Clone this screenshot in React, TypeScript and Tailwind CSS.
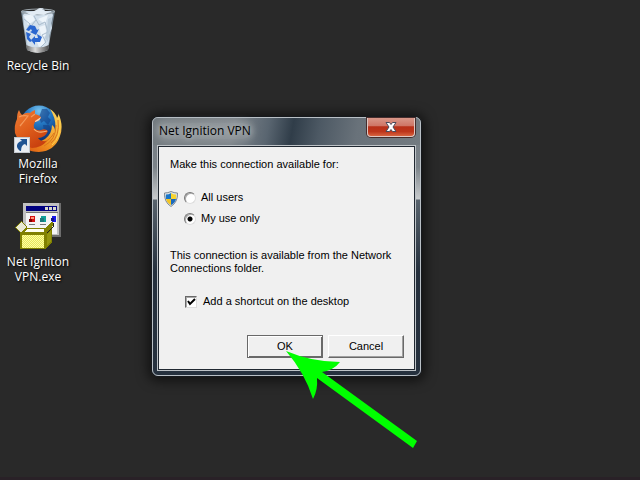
import type { ReactNode } from 'react';

function RecycleBinIcon() {
  return (
    <svg viewBox="0 0 48 48" className="h-12 w-12" aria-hidden="true">
      <defs>
        <linearGradient id="binGlass" x1="0" x2="1">
          <stop offset="0" stopColor="#71828f" />
          <stop offset="0.2" stopColor="#c3d2de" />
          <stop offset="0.75" stopColor="#b9cad8" />
          <stop offset="1" stopColor="#5c6b77" />
        </linearGradient>
        <linearGradient id="binBase" x1="0" x2="1">
          <stop offset="0" stopColor="#666" />
          <stop offset="0.4" stopColor="#dcdcdc" />
          <stop offset="1" stopColor="#4a4a4a" />
        </linearGradient>
      </defs>
      <path d="M7 4 L13 43 Q24 48 34 43 L41 4 Z" fill="url(#binGlass)" />
      <path d="M9 8 L13 4 20 5 25 1 29 1 31 4 37 4 39 8 37 16 38 21 35 28 35 34 33 40 14 40 12 27 10 20Z" fill="#d3e0ec" />
      <path d="M10 9 L18 7 21 13 14 18Z M24 12 L34 8 31 17Z M25 20 L31 18 33 28 28 31Z M22 33 L29 30 31 37 25 40Z" fill="#edf4fa" />
      <path d="M20 9 L25 18 31 15 34 25 28 28 M10 12 L16 17 13 22 M28 28 L32 35 27 40 M22 13 L18 18" fill="none" stroke="#a9bccd" strokeWidth="1" />
      <path d="M34 12 L38 10 36 24 34 35 31 31 33 22Z" fill="#b3c5d6" opacity="0.8" />
      <path d="M13 42 L12 38 Q24 43 35 38 L34 43 Q24 49 13 43Z" fill="url(#binBase)" />
      <path d="M8 5 Q24 11 40 5" fill="none" stroke="#9aabb8" strokeWidth="0.800" />
      <ellipse cx="24" cy="4.500" rx="16.500" ry="2.500" fill="none" stroke="#9aa3a9" strokeWidth="1.200" />
      <path d="M13 6 L20 4 27 1 30 4 35 5 30 8 23 7 18 9Z" fill="#e3ecf4" />
      <g fill="#2a66cf">
        <path d="M12 23 L16 18 21 19 23 23 25 22 22 28 16 25 18 24 17 22 15 24Z" />
        <path d="M12 25 L17 27 15 30 18 34 16 35 13 32Z" />
        <path d="M17 33 L21 29 21 31 24 31 23 27 28 30 26 35 21 35 21 38Z" />
      </g>
    </svg>
  );
}

function FirefoxIcon() {
  return (
    <svg viewBox="0 0 48 48" className="h-12 w-12" aria-hidden="true">
      <defs>
        <radialGradient id="globe" cx="0.5" cy="0.15" r="0.85">
          <stop offset="0" stopColor="#79c4ee" />
          <stop offset="0.4" stopColor="#2478c4" />
          <stop offset="1" stopColor="#0a2866" />
        </radialGradient>
        <linearGradient id="fox" x1="0" y1="0" x2="0.6" y2="1">
          <stop offset="0" stopColor="#ee7d35" />
          <stop offset="0.5" stopColor="#e0601d" />
          <stop offset="1" stopColor="#c9410f" />
        </linearGradient>
        <linearGradient id="foxTail" x1="0" y1="1" x2="1" y2="0">
          <stop offset="0" stopColor="#d94a10" />
          <stop offset="0.4" stopColor="#ee8d1e" />
          <stop offset="1" stopColor="#ffe163" />
        </linearGradient>
      </defs>
      <circle cx="25" cy="19" r="18.500" fill="url(#globe)" />
      <path d="M28 4 L33 4 36 8 34 12 37 15 34 20 30 16 27 18 25 12Z M29 20 L35 20 38 25 34 30 30 27Z" fill="#123f87" opacity="0.6" />
      <path d="M36 4 Q42 8 43 13 Q45 10 44 8 Q50 20 46 31 Q41 46 25 47 Q10 47 4 35 L12 32 Q22 40 31 34 Q38 29 38 20 Q41 22 41 26 Q43 15 36 4Z" fill="url(#foxTail)" />
      <path d="M44 15 Q46 31 37 38 M42 20 Q42 35 30 41 M40 28 Q35 37 26 38" fill="none" stroke="#d9761c" strokeWidth="1" />
      <path d="M46 17 Q47 32 38 40" fill="none" stroke="#ffd34a" strokeWidth="1" />
      <path d="M3 14 Q3 8 5 5 Q6 8 8 10 Q12 7 16 8 Q18 6 21 5 L21 9 Q25 10 27 12 Q26 16 21 17 Q19 20 20 23 Q23 26 27 25 Q31 23 34 26 Q31 33 24 33 Q27 37 33 36 Q27 43 18 43 Q5 41 1 28 Q0 20 3 14Z" fill="url(#fox)" />
      <path d="M5 12 Q9 10 14 11 Q11 15 6 21 M21 9 L17 12" fill="none" stroke="#f49a5b" strokeWidth="1.200" />
      <path d="M20 24 Q24 29 33 26" fill="none" stroke="#f7b277" strokeWidth="1.200" />
      <path d="M21 16 Q24 14 27 12 Q26 16 21 17Z" fill="#f9d9bd" />
      <g>
        <rect x="0.500" y="32.500" width="15" height="15" fill="#e9edf2" stroke="#c3c8ce" />
        <path d="M6 46 Q1 42 4 38 Q6 36 8 36 L6 34 13 34 13 41 11 39 Q7 40 7 46Z" fill="#1f5392" />
      </g>
    </svg>
  );
}

function InstallerIcon() {
  return (
    <svg viewBox="0 0 48 48" className="h-12 w-12" aria-hidden="true" shapeRendering="crispEdges">
      <defs>
        <pattern id="boxDots" width="2" height="2" patternUnits="userSpaceOnUse">
          <rect width="2" height="2" fill="#ffffa0" />
          <rect width="1" height="1" fill="#e6e65c" />
          <rect x="1" y="1" width="1" height="1" fill="#e6e65c" />
        </pattern>
      </defs>
      <rect x="9" y="0" width="38" height="34" fill="#6d6d6d" />
      <rect x="9" y="0" width="36" height="32" fill="#c0c0c0" />
      <rect x="12" y="10" width="31" height="21" fill="#f4f4f4" />
      <rect x="12" y="3" width="31" height="5" fill="#000080" />
      <path d="M31 4h3v3h-3z M35 4h3v3h-3z M39 4h3v3h-3z" fill="#d7d7c9" />
      <rect x="12" y="9" width="32" height="1" fill="#777" />
      <g>
        <path d="M16 13h5v6h-5z" fill="#d51010" />
        <path d="M17 14h3v2h-3z" fill="#ff967c" />
        <path d="M15 16h3v3h-3z" fill="#800000" />
        <path d="M27 13h5v6h-5z" fill="#10a09a" />
        <path d="M26 15h4v4h-4z" fill="#1c7b7c" />
        <path d="M38 13h4v6h-4z" fill="#1717e8" />
        <path d="M37 15h3v3h-3z" fill="#10108a" />
        <path d="M15 21h6v1h-6z M26 21h6v1h-6z M35 21h3v1h-3z" fill="#777" />
      </g>
      <path d="M12 25 H31 L38 19 40 21 38 24 38 39 31 46 H6 V30Z" fill="#808000" />
      <path d="M13 26H30V29H10Z" fill="#fffff0" />
      <path d="M8 32H30V45H8Z" fill="url(#boxDots)" />
      <path d="M33 31 L37 27 V38 L33 42Z" fill="#96960f" />
      <path d="M39 20 L39 24 33 30" fill="none" stroke="#222" />
      <path d="M1 25 L7 18 13 24 7 31Z" fill="#808000" />
      <path d="M2 25 L7 19 12 24 7 30Z" fill="#e8e8d4" />
    </svg>
  );
}

function ShieldIcon() {
  return (
    <svg viewBox="0 0 14 16" className="h-4 w-3.5 shrink-0" aria-hidden="true">
      <path d="M7 0.500 Q10 2 13.500 2 Q14 11 7 15.500 Q0 11 0.500 2 Q4 2 7 0.500Z" fill="#dce4e9" stroke="#7f8992" />
      <path d="M7 2 V8 H2 Q1.500 6 2 3.500 Q5 3.500 7 2Z" fill="#1976c9" />
      <path d="M7 2 V8 H12 Q12.500 6 12 3.500 Q9 3.500 7 2Z" fill="#f8d42f" />
      <path d="M7 8 V14 Q3 12 2 8Z" fill="#f3c522" />
      <path d="M7 8 V14 Q11 12 12 8Z" fill="#1b69bc" />
    </svg>
  );
}

function DesktopIcon({ icon, label }: { icon: ReactNode; label: string }) {
  return (
    <button
      type="button"
      className="flex h-[98px] w-full flex-col items-center gap-[3px] font-['Open_Sans','Noto_Sans',sans-serif] text-[12px] leading-[15px] text-white [text-shadow:1px_1px_2px_#000]"
    >
      {icon}
      <span className="w-[70px] text-center">{label}</span>
    </button>
  );
}

const radioClass =
  'm-0 h-3 w-3 shrink-0 appearance-none rounded-full border border-t-[#777] border-l-[#777] border-r-[#ddd] border-b-[#ddd] bg-white shadow-[inset_1px_1px_0_#aaa] checked:bg-[radial-gradient(circle,#000_2px,#fff_3px)]';

const buttonClass =
  'h-[23px] w-[76px] border bg-[#f0f0f0]';

function ConnectionDialog() {
  return (
    <section
      role="dialog"
      aria-labelledby="dialog-title"
      className="absolute top-[116px] left-[151px] w-[271px] rounded-[7px] border border-[#16191d] bg-[linear-gradient(#737b82_0px,#7b8389_50px,#c8cbcd_82px,#58636d_83px,#25303d_155px,#26313e_100%)] font-['Liberation_Sans',Arial,sans-serif] text-[11px] leading-[13px] text-black shadow-[0_1px_12px_3px_#0009]"
    >
      <div className="rounded-[6px] border border-[#b9c0c6] px-1 pb-1">
        <header className="-mx-1 flex h-[27px] items-start justify-between rounded-t-[5px] bg-[linear-gradient(100deg,#737b80_0%,#7e858b_30%,#596570_43%,#303d49_52%,#4d5964_62%,#69727a_76%,#737b81_100%)] pl-1.5">
          <h1
            id="dialog-title"
            className="mt-[5px] rounded-full bg-[#a4a9ad]/40 font-['Open_Sans','Noto_Sans',sans-serif] text-[12px] leading-[16px] shadow-[0_0_6px_3px_#a4a9ad66] [text-shadow:0_0_6px_#d9dcdf]"
          >
            Net Ignition VPN
          </h1>
          <button
            type="button"
            aria-label="Close"
            className="mr-[5px] flex h-[19px] w-[48px] items-center justify-center rounded-b-[4px] border border-t-0 border-[#e0c7c2] bg-[linear-gradient(#d99789_0%,#ce7464_45%,#b83019_48%,#bd351b_75%,#d8633f_100%)] shadow-[0_0_0_1px_#462d2c]"
          >
            <svg viewBox="0 0 12 10" className="h-2.5 w-3" aria-hidden="true">
              <path d="M1 0.500H4.500L6 2.500 7.500 0.500H11L8 5 11 9.500H7.500L6 7.500 4.500 9.500H1L4 5Z" fill="#fff" stroke="#4a4b5b" />
            </svg>
          </button>
        </header>

        <div className="border border-[#bec3c7]">
          <form
            className="border border-[#202831] bg-[#f0f0f0] pt-[11px] pr-[10px] pb-[11px] pl-[5px]"
            onSubmit={(event) => event.preventDefault()}
          >
            <fieldset>
              <legend className="pl-1.5">Make this connection available for:</legend>
              <div className="mt-5 flex items-start gap-[6px]">
                <ShieldIcon />
                <div className="flex flex-col gap-2">
                  <label className="flex items-center gap-[5px]">
                    <input type="radio" name="availability" value="all" className={radioClass} />
                    All users
                  </label>
                  <label className="flex items-center gap-[5px]">
                    <input type="radio" name="availability" value="mine" defaultChecked className={radioClass} />
                    My use only
                  </label>
                </div>
              </div>
            </fieldset>

            <p className="mt-6 pl-1.5">
              This connection is available from the Network Connections folder.
            </p>

            <label className="mt-5 ml-[21px] flex items-center gap-1.5">
              <span className="grid">
                <input
                  type="checkbox"
                  defaultChecked
                  className="peer col-start-1 row-start-1 m-0 h-3 w-3 appearance-none border border-t-[#696969] border-l-[#696969] border-r-[#ddd] border-b-[#ddd] bg-white shadow-[inset_1px_1px_0_#aaa]"
                />
                <svg viewBox="0 0 12 12" className="pointer-events-none invisible col-start-1 row-start-1 h-3 w-3 peer-checked:visible" aria-hidden="true">
                  <path d="M3 5 L5 8 10 3" fill="none" stroke="#000" strokeWidth="2" />
                </svg>
              </span>
              Add a shortcut on the desktop
            </label>

            <div className="mt-[27px] flex justify-end gap-[5px]">
              <button type="submit" className={`${buttonClass} border-[#696969] shadow-[inset_1px_1px_0_#fff,inset_-1px_-1px_0_#696969]`}>
                OK
              </button>
              <button type="button" className={`${buttonClass} border-t-white border-l-white border-r-[#696969] border-b-[#696969] shadow-[inset_-1px_-1px_0_#a0a0a0]`}>
                Cancel
              </button>
            </div>
          </form>
        </div>
      </div>
    </section>
  );
}

export default function App() {
  return (
    <main className="relative flex min-h-screen flex-col overflow-hidden border-b-3 border-[#292127] bg-[#292929]">
      <nav aria-label="Desktop shortcuts" className="flex w-[76px] flex-col pt-[7px]">
        <DesktopIcon icon={<RecycleBinIcon />} label="Recycle Bin" />
        <DesktopIcon icon={<FirefoxIcon />} label="Mozilla Firefox" />
        <DesktopIcon icon={<InstallerIcon />} label="Net Igniton VPN.exe" />
      </nav>

      <ConnectionDialog />

      {/* Pointer to the OK button */}
      <svg viewBox="0 0 131 98" className="pointer-events-none absolute top-[350px] left-[286px] h-[98px] w-[131px]" aria-hidden="true">
        <path d="M0 1 Q26 12 54 12 Q48 20 36 22 L131 91 127 98 31 28 Q32 40 27 49 Q19 23 0 1Z" fill="#00ff00" />
      </svg>
    </main>
  );
}
